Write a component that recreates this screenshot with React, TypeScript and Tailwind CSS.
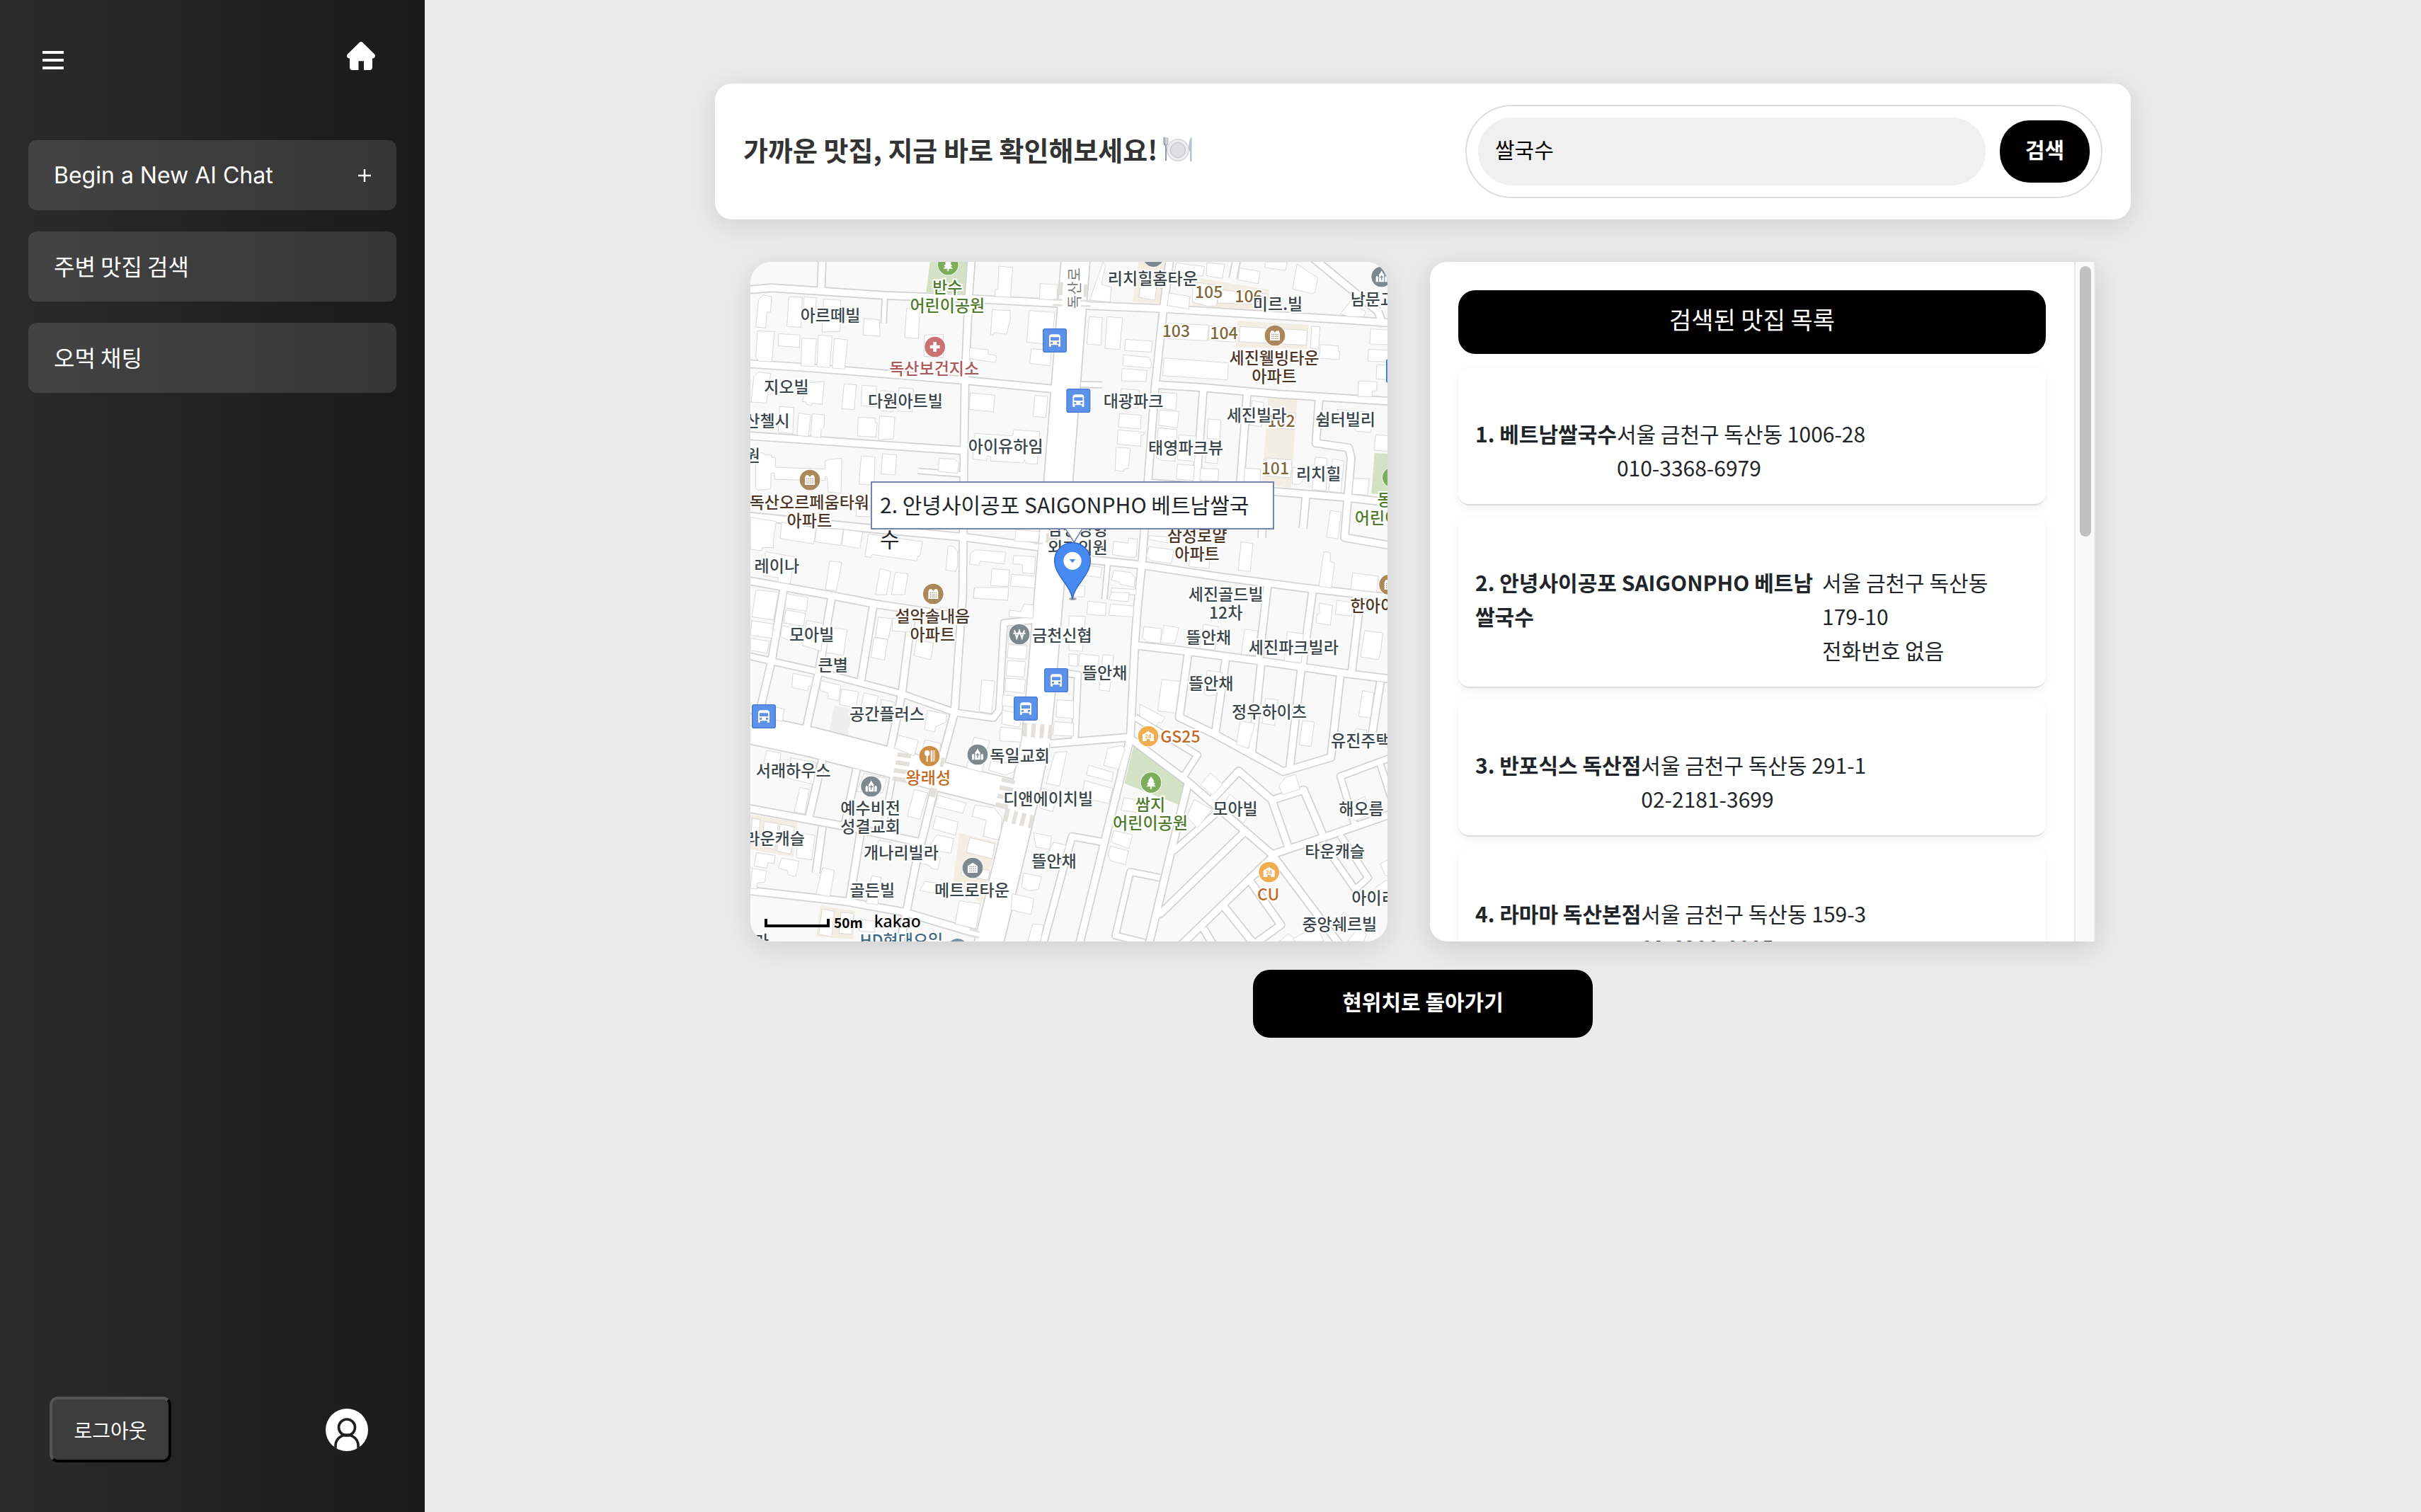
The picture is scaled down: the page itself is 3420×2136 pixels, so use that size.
import React from "react";

type Shape = string;

/* ---------- map geometry (viewBox units, 3 units per pixel) ---------- */

type Road = { d: string; w?: number };

const roads: Road[] = [
  { d: "M0 150L120 140L600 172L960 186L1330 205L1460 215L1780 228L2550 275L2760 290" },
  { d: "M968 0L955 180L940 530L935 870L932 1200L930 1440L895 1940L830 2180L730 2590L660 2940" },
  { d: "M0 460L300 480L940 532L1310 568" },
  { d: "M1430 549L1520 551", w: 20 },
  { d: "M1745 550L1940 562L2260 590L2760 622" },
  { d: "M1810 0L1780 230L1745 560L1715 960L1690 1300L1670 1500L1660 1640L1640 2050L1540 2450L1420 2940" },
  { d: "M0 765L500 800L935 830" },
  { d: "M740 916L925 930", w: 18 },
  { d: "M0 1105L540 1160L940 1197L1250 1238" },
  { d: "M1470 1292L1690 1315L2020 1365L2380 1412L2760 1455" },
  { d: "M0 1377L380 1445L560 1480L930 1535" },
  { d: "M172 1410L120 1720L66 1950" },
  { d: "M375 1450L320 1765L262 2030" },
  { d: "M552 1480L498 1810" },
  { d: "M715 1520L672 1860L620 2110" },
  { d: "M0 1695L310 1765L670 1860L900 1940L1060 1963L1084 1930L1105 1560L1230 1548", w: 24 },
  { d: "M335 2140L275 2400" },
  { d: "M480 2180L430 2420" },
  { d: "M634 2210L590 2440", w: 20 },
  { d: "M500 2430L450 2740" },
  { d: "M0 2342L420 2420L750 2490" },
  { d: "M0 2692L430 2740L680 2785L1000 2880" },
  { d: "M335 2425L308 2620" },
  { d: "M1660 1655L1880 1680L2180 1720L2560 1775L2760 1800" },
  { d: "M1885 1690L1848 1960L1995 2030L2288 2190L2490 2130L2530 1785" },
  { d: "M2045 1710L2000 2030" },
  { d: "M2195 1730L2155 2110" },
  { d: "M2365 1750L2315 2180" },
  { d: "M2222 1400L2185 1720" },
  { d: "M2412 1430L2370 1740" },
  { d: "M2615 1460L2578 1770" },
  { d: "M2700 1810L2665 2030" },
  { d: "M1640 2050L1880 2230L2240 2540L2540 2940" },
  { d: "M1660 1960L1925 2120L1870 2205", w: 24 },
  { d: "M1885 2240L1815 2520L1715 2940" },
  { d: "M1820 2530L2000 2370", w: 24 },
  { d: "M1985 2310L2100 2188L2240 2310L2310 2510" },
  { d: "M2250 2308L2375 2268L2455 2455" },
  { d: "M2245 2540L2480 2462L2760 2365" },
  { d: "M2120 2450L1770 2790L1745 2800" },
  { d: "M2250 2545L1840 2940" },
  { d: "M2145 2650L2278 2840L2160 2925" },
  { d: "M2035 2760L2180 2940" },
  { d: "M1950 2855L2000 2940" },
  { d: "M2530 2460L2648 2640L2594 2690L2455 2490", w: 24 },
  { d: "M2760 2125L2530 2210L2590 2410", w: 24 },
  { d: "M2700 2160L2745 2300", w: 24 },
  { d: "M1300 2072L1630 2045" },
  { d: "M1330 1768L1418 1780L1405 2055", w: 24 },
  { d: "M1530 2490L1393 2465L1265 2940", w: 26 },
  { d: "M1765 2640L1640 2615L1577 2885L1700 2915", w: 24 },
  { d: "M1950 565L1920 975" },
  { d: "M2135 590L2105 985" },
  { d: "M1725 968L2250 1003L2550 1028L2760 1052" },
  { d: "M2440 610L2427 798L2565 818L2576 860L2548 1198L2760 1235" },
  { d: "M2385 1020L2372 1160" },
  { d: "M2205 1010L2198 1200" },
  { d: "M2410 10L2690 240" },
  { d: "M2095 0L2075 100" },
  { d: "M2690 240L2705 280" },
  { d: "M335 0L330 140" },
  { d: "M600 180L595 290", w: 18 },
  { d: "M1545 1300L1530 1460", w: 18 },
  { d: "M1410 0L1365 580L1335 960L1290 1500L1262 1840L1240 2060L1190 2300L1035 2940", w: 118 },
  { d: "M0 2003L290 2065L620 2150L850 2215L1150 2290", w: 122 },
];

const parks: Shape[] = [
  "795,0 955,0 940,165 775,160",
  "1655,2080 1870,2240 1845,2330 1615,2240",
  "2675,840 2760,845 2760,1020 2662,1012",
];

const estates: Shape[] = [
  "1680,0 1795,0 1765,205 1650,200",
  "1940,100 2230,148 2220,235 1900,215",
  "2095,280 2395,297 2390,400 2088,390",
  "2225,605 2348,615 2320,990 2198,965",
  "0,2365 230,2405 212,2550 0,2515",
  "915,2450 1075,2490 1010,2750 890,2655",
  "325,2760 475,2780 465,2900 310,2890",
];

const crosswalks: Shape[] = [
  "655,2108 712,2116 708,2134 651,2126",
  "648,2142 706,2150 702,2168 644,2160",
  "641,2176 700,2184 696,2202 637,2194",
  "634,2210 692,2218 688,2236 630,2228",
  "1188,1982 1204,1984 1200,2042 1184,2040",
  "1223,1985 1241,1987 1236,2046 1218,2044",
  "1259,1988 1277,1990 1272,2049 1254,2047",
  "1295,1991 1311,1993 1306,2052 1290,2050",
  "1097,2216 1153,2228 1149,2244 1093,2232",
  "1088,2248 1145,2260 1141,2278 1084,2266",
  "1079,2284 1120,2292 1116,2310 1075,2302",
  "1071,2320 1125,2330 1121,2348 1067,2338",
  "1114,2346 1130,2350 1118,2404 1102,2400",
  "1150,2356 1166,2360 1152,2414 1136,2410",
  "1183,2364 1201,2368 1187,2422 1169,2418",
  "1217,2372 1232,2376 1220,2432 1206,2428",
  "1312,185 1352,187 1352,195 1312,193",
  "1312,208 1352,210 1352,218 1312,216",
  "1340,115 1356,116 1352,172 1336,170",
  "1430,190 1472,192 1472,200 1430,198",
  "1430,212 1472,214 1472,222 1430,220",
  "1443,125 1460,126 1458,180 1442,178",
  "1285,1180 1350,1184 1346,1225 1282,1220",
  "1232,1218 1270,1220 1268,1228 1230,1226",
  "962,2855 1002,2866 1000,2874 960,2863",
  "960,2880 1000,2890 998,2898 958,2888",
  "840,2130 855,2134 846,2172 832,2168",
  "795,2258 822,2262 812,2300 788,2294",
];

const buildings: { x: number; y: number; shapes: Shape[] }[] = [
  {
    x: 0,
    y: 0,
    shapes: [
      "65,190 85,170 120,178 115,243 100,243 95,310 53,306",
      "193,177 250,180 244,307 185,303",
      "258,178 310,182 306,240 254,238",
      "340,187 412,192 410,325 334,327",
      "512,270 576,275 580,345 507,340",
      "692,227 748,230 742,355 684,350",
      "60,322 132,326 121,453 66,450 53,435",
      "150,334 240,340 238,392 148,386",
      "248,353 310,356 302,474 245,470",
      "318,340 377,344 366,478 312,474",
      "386,354 442,360 430,484 377,480",
      "768,340 848,337 848,437 765,430",
      "1083,48 1142,54 1132,180 1066,176 1068,147 1079,147",
      "1258,122 1332,127 1328,192 1255,188",
      "1055,232 1130,236 1132,270 1116,336 1062,330 1060,340 1048,338",
      "1212,236 1320,244 1308,380 1201,370",
      "960,394 1038,402 1036,420 1072,428 1070,456 958,440",
      "1220,398 1306,404 1300,470 1214,460",
      "45,515 65,497 116,503 98,628 33,624",
      "270,543 343,536 334,634 293,628 290,638 268,634 266,624 250,622",
      "427,547 479,551 470,656 418,652",
      "503,553 564,557 562,645 500,640",
      "583,575 638,580 635,665 580,660",
      "660,563 721,568 716,666 655,662",
      "154,643 214,647 210,757 148,752",
      "234,670 286,678 280,735 275,770 228,765",
      "292,674 344,678 342,732 330,740 328,775 286,770",
      "487,688 560,692 558,710 568,714 562,772 484,768",
      "578,683 642,688 636,780 572,784",
      "962,585 1066,595 1060,665 958,655",
      "1236,596 1290,600 1282,690 1228,684",
      "52,845 80,838 92,848 118,848 120,858 136,860 136,900 346,908 346,874 358,868 418,862 414,1010 360,1005 356,942 346,942 346,956 134,952 132,925 118,925 116,992 62,998 52,985",
      "500,852 558,856 554,975 490,972",
      "590,843 650,848 644,932 584,928",
      "830,862 896,866 914,884 908,926 826,918",
      "982,757 1142,767 1146,741 1256,749 1246,887 1196,884 1192,868 1186,882 1048,874 1048,854 1034,852 1030,872 972,866",
      "480,1060 540,1064 540,1110 478,1108",
      "30,1112 140,1130 126,1215 128,1240 80,1242 78,1254 30,1248",
      "163,1133 308,1158 298,1225 156,1202",
      "312,1157 424,1164 412,1232 303,1216",
      "426,1163 506,1175 494,1244 418,1232",
      "530,1183 760,1216 748,1276 740,1278 734,1297 546,1270 542,1283 516,1278",
      "868,1234 890,1236 908,1256 908,1320 900,1342 858,1336",
      "94,1258 218,1280 198,1395 146,1386 148,1368 84,1360",
      "366,1298 418,1304 402,1385 394,1424 348,1418",
      "580,1330 626,1342 606,1440 560,1440",
      "644,1345 698,1352 684,1440 628,1440",
      "964,1264 984,1250 1112,1260 1106,1310 1004,1298 998,1316 958,1310",
      "1146,1274 1238,1280 1234,1352 1184,1348 1184,1312 1142,1310",
      "1054,1330 1128,1336 1124,1406 1048,1402",
      "1136,1354 1238,1362 1234,1412 1132,1404",
      "978,1412 1124,1422 1120,1464 975,1455",
      "1156,1165 1256,1172 1250,1218 1150,1214",
    ],
  },
  {
    x: 1380,
    y: 0,
    shapes: [
      "145,30 155,45 138,125 180,137 174,200 88,192",
      "306,100 375,110 364,192 297,180",
      "424,162 512,176 508,230 416,215",
      "585,34 660,40 650,100 582,88",
      "722,56 810,70 802,122 718,106",
      "832,30 925,30 918,66 830,54",
      "455,34 575,50 568,90 448,70",
      "967,40 1055,98 1042,160 1030,164 948,145",
      "525,115 640,130 625,218 590,218 524,200",
      "634,148 840,166 838,210 630,204",
      "86,262 142,266 136,383 76,378",
      "162,262 227,267 216,401 153,397",
      "240,358 353,366 349,412 236,406",
      "230,424 340,434 350,460 348,480 228,470",
      "226,482 331,490 326,537 223,534",
      "420,290 592,298 586,364 418,356",
      "595,300 710,308 706,370 592,362",
      "726,304 1010,320 1006,383 721,368",
      "1028,302 1064,305 1058,400 1024,396",
      "1066,380 1142,386 1140,408 1148,410 1146,444 1060,438",
      "403,437 676,458 672,530 397,512",
      "1278,314 1380,320 1380,382 1275,378",
      "1270,400 1380,406 1380,456 1266,450",
      "1305,466 1380,470 1380,530 1302,526",
      "1228,534 1306,538 1304,576 1286,578 1284,602 1224,600",
      "1195,195 1258,243 1250,262 1188,262 1150,250",
      "222,568 300,574 292,650 216,645",
      "390,582 458,588 452,658 384,650",
      "215,673 307,680 303,738 209,730",
      "383,658 466,664 460,733 380,722",
      "208,742 320,752 316,764 306,764 304,811 204,802",
      "378,734 458,740 450,875 390,870 368,855",
      "466,763 540,768 532,876 460,868",
      "590,696 644,700 640,782 586,778",
      "200,816 260,820 252,906 234,908 232,917 196,914",
      "460,887 533,893 528,957 454,950",
      "558,904 634,908 632,958 554,955",
      "582,800 636,810 630,884 578,880",
      "745,904 812,908 810,965 742,960",
      "776,618 826,626 816,728 766,722",
      "855,664 962,670 956,740 848,732",
      "836,860 945,870 940,945 828,936",
      "1135,655 1280,668 1280,752 1220,748",
      "1300,763 1380,768 1380,835 1293,828",
      "1044,858 1094,862 1090,1000 1030,995",
      "1118,864 1166,874 1152,1008 1100,1002",
      "948,900 1032,906 978,972 946,972",
      "1206,946 1272,950 1266,1018 1200,1014",
      "1108,1084 1154,1090 1140,1204 1092,1196",
      "730,1216 780,1224 768,1342 717,1336",
      "340,1190 420,1196 440,1216 436,1225 336,1205",
      "190,1214 250,1222 254,1200 290,1206 286,1278 270,1283 183,1270",
      "340,1237 445,1250 434,1308 346,1296 328,1275",
      "515,1270 598,1278 594,1330 508,1320",
      "75,1316 140,1325 134,1368 70,1358",
      "190,1337 262,1346 282,1368 276,1408 216,1396 214,1386 180,1378",
      "180,1412 285,1418 285,1440 178,1440",
      "20,1400 68,1404 66,1450 16,1448",
      "1080,1258 1107,1262 1108,1300 1126,1306 1112,1412 1060,1405",
      "1202,1348 1312,1362 1304,1430 1195,1418",
    ],
  },
  {
    x: 0,
    y: 1440,
    shapes: [
      "54,-20 150,-10 128,108 36,94",
      "184,-4 274,12 268,70 176,56",
      "180,64 264,80 256,133 170,120",
      "36,110 128,125 122,185 30,172",
      "30,185 110,198 100,250 90,246 30,236",
      "164,132 204,138 200,196 158,180",
      "268,110 338,122 330,240 250,215",
      "362,140 440,148 424,258 352,246",
      "572,96 632,102 614,190 560,180",
      "554,182 612,190 598,278 541,266",
      "632,100 716,108 708,158 632,154",
      "734,190 806,206 794,276 724,258",
      "980,-30 1125,-30 1120,24 976,15",
      "1128,66 1176,72 1190,40 1230,44 1228,100 1126,94",
      "1126,140 1210,146 1200,210 1122,206",
      "1124,212 1203,216 1198,274 1118,268",
      "1120,280 1196,284 1190,350 1114,344",
      "1112,354 1196,360 1190,418 1108,408",
      "1010,362 1066,366 1052,504 1000,495",
      "1100,426 1130,426 1182,440 1178,480 1096,470",
      "1098,490 1150,500 1176,550 1168,562 1096,548",
      "1090,562 1182,570 1178,625 1086,620",
      "1330,446 1400,450 1400,525 1325,518",
      "1318,538 1400,545 1400,600 1312,596",
      "1320,670 1372,664 1340,812 1284,800",
      "210,334 295,350 290,388 276,388 272,408 206,394",
      "328,364 413,384 404,450 358,440 360,418 326,406",
      "416,400 488,412 478,480 408,466",
      "512,416 572,430 560,480 500,472",
      "585,444 640,456 630,480 580,475",
      "780,490 862,506 860,540 814,560 812,582 768,572",
      "138,476 174,486 165,538 130,530",
      "657,596 742,618 724,684 640,650",
      "770,616 836,630 830,700 750,685",
      "978,604 1044,620 1010,752 945,735",
      "1050,704 1160,720 1144,752 1110,765 1040,744",
      "100,660 160,672 150,730 86,715",
      "200,692 310,712 296,804 188,778",
      "240,818 280,825 260,930 216,920",
      "512,757 608,780 590,840 480,835",
      "725,826 782,840 748,952 695,940",
      "824,850 944,884 930,927 814,898",
      "982,892 1064,904 1096,946 1090,1010 1080,1040 1017,1024 1030,956 970,940",
      "816,938 910,964 900,1020 802,992",
      "820,1018 892,1034 880,1096 780,1080",
      "960,1030 1066,1056 1056,1120 945,1092",
      "930,1150 1046,1170 1036,1210 922,1190",
      "38,948 72,954 64,1050 30,1050",
      "88,962 148,970 134,1080 78,1068",
      "156,972 216,985 200,1100 142,1086",
      "230,1010 304,1020 290,1124 225,1115",
      "56,1094 136,1106 130,1140 104,1136 100,1160 46,1150",
      "163,1116 236,1130 222,1195 190,1188 188,1170 148,1160",
      "38,1160 98,1170 92,1218 60,1222 58,1248 30,1245",
      "336,1157 386,1168 380,1210 366,1280 308,1268",
      "572,1042 630,1050 620,1120 560,1110",
      "760,1100 836,1115 824,1166 800,1160 780,1145 750,1138",
      "544,1192 584,1198 570,1315 520,1308",
      "768,1216 820,1222 808,1265 748,1255",
      "915,1298 1005,1310 986,1416 897,1396",
      "334,1332 386,1342 374,1450 320,1440",
      "414,1346 468,1352 460,1440 405,1435",
      "496,1376 560,1385 556,1430 490,1425",
      "1230,1010 1306,1024 1298,1080 1240,1070",
      "1188,1180 1264,1196 1250,1250 1210,1255 1180,1240",
      "1140,1268 1232,1288 1220,1356 1134,1336",
      "1264,820 1330,840 1312,920 1256,905",
      "1226,1395 1272,1400 1260,1470 1206,1470",
      "1314,1050 1368,1062 1340,1140 1280,1120",
    ],
  },
  {
    x: 1380,
    y: 1440,
    shapes: [
      "0,90 70,92 58,240 0,236",
      "80,28 158,36 155,90 76,84",
      "176,40 274,48 272,94 169,88",
      "180,-10 256,-8 252,30 170,22",
      "0,250 38,254 36,304 0,300",
      "46,250 128,260 124,306 40,302",
      "144,254 190,258 172,410 128,404",
      "318,136 392,144 388,206 330,200 312,182",
      "402,130 466,140 448,208 388,204",
      "570,126 634,136 618,235 555,228",
      "745,147 800,154 790,258 730,252",
      "926,157 994,166 985,290 912,280",
      "1060,36 1118,46 1108,130 1048,120 1052,82 1062,80",
      "1136,24 1200,34 1198,90 1130,84",
      "1254,153 1330,162 1322,236 1312,276 1236,264 1240,236",
      "394,360 470,368 452,502 376,492",
      "586,322 650,330 624,424 590,430 572,420",
      "834,440 886,446 872,554 818,546",
      "725,536 788,545 760,652 710,634",
      "990,534 1040,540 1026,644 976,636",
      "1244,407 1292,416 1278,522 1228,516",
      "1216,568 1262,574 1255,630 1206,625",
      "300,464 406,520 392,545 380,540 370,556 300,515",
      "165,650 226,640 238,654 210,740 148,724",
      "84,723 188,754 182,792 74,764",
      "66,787 186,822 168,886 56,860",
      "234,860 320,876 308,925 220,914",
      "190,1000 270,1018 254,1077 178,1048",
      "176,1066 252,1086 240,1145 176,1128 166,1104",
      "600,756 652,804 608,850 558,806",
      "530,868 606,910 544,990 500,940",
      "682,846 770,920 740,968 650,900",
      "890,810 916,776 960,762 980,824 906,848",
      "890,1470 930,1438 975,1470",
      "950,1460 1050,1400 1080,1470 960,1470",
      "1120,1400 1165,1346 1220,1390 1180,1430",
      "1180,1470 1230,1410 1260,1440 1250,1470",
      "1320,1140 1380,1110 1380,1195 1340,1190",
      "1295,1245 1345,1210 1380,1240 1380,1280 1310,1270",
      "1185,890 1255,855 1280,930 1210,960",
    ],
  },
];

/* ---------- map labels and markers ---------- */

type Tone = "slate" | "green" | "brown" | "gold" | "red" | "orange" | "blue";

const toneClass: Record<Tone, string> = {
  slate: "text-[#3a454c]",
  green: "text-[#4e7a2b]",
  brown: "text-[#4d3626]",
  gold: "text-[#80683a]",
  red: "text-[#ae5759]",
  orange: "text-[#c2681f]",
  blue: "text-[#3f6a85]",
};

const labels: { t: string; x: number; y: number; c?: Tone }[] = [
  { t: "102", x: 2283, y: 705, c: "gold" },
  { t: "105", x: 1976, y: 158, c: "gold" },
  { t: "106", x: 2145, y: 175, c: "gold" },
  { t: "103", x: 1837, y: 322, c: "gold" },
  { t: "104", x: 2040, y: 333, c: "gold" },
  { t: "101", x: 2257, y: 905, c: "gold" },
  { t: "아르떼빌", x: 372, y: 258 },
  { t: "반수\n어린이공원", x: 868, y: 175, c: "green" },
  { t: "독산보건지소", x: 812, y: 483, c: "red" },
  { t: "지오빌", x: 186, y: 560 },
  { t: "다원아트빌", x: 690, y: 620 },
  { t: "산첼시", x: 105, y: 703 },
  { t: "원", x: 43, y: 850 },
  { t: "아이유하임", x: 1115, y: 812 },
  { t: "독산오르페움타워\n아파트", x: 283, y: 1087, c: "brown" },
  { t: "레이나", x: 145, y: 1320 },
  { t: "리치힐홈타운", x: 1738, y: 100 },
  { t: "미르.빌", x: 2268, y: 210 },
  { t: "남문교회", x: 2703, y: 187 },
  { t: "세진웰빙타운\n아파트", x: 2253, y: 475, c: "brown" },
  { t: "대광파크", x: 1656, y: 620 },
  { t: "세진빌라", x: 2178, y: 680 },
  { t: "쉼터빌리", x: 2555, y: 698 },
  { t: "태영파크뷰", x: 1878, y: 818 },
  { t: "리치힐", x: 2441, y: 930 },
  { t: "동산\n어린이공원", x: 2753, y: 1075, c: "green" },
  { t: "삼성로얄\n아파트", x: 1926, y: 1228, c: "brown" },
  { t: "삼성정형\n외과의원", x: 1420, y: 1203 },
  { t: "세진골드빌\n12차", x: 2048, y: 1478 },
  { t: "한아이", x: 2671, y: 1488, c: "brown" },
  { t: "설악솔내음\n아파트", x: 805, y: 1570, c: "brown" },
  { t: "모아빌", x: 293, y: 1610 },
  { t: "큰별", x: 383, y: 1740 },
  { t: "금천신협", x: 1354, y: 1612 },
  { t: "뜰안채", x: 1975, y: 1622 },
  { t: "세진파크빌라", x: 2335, y: 1663 },
  { t: "뜰안채", x: 1535, y: 1772 },
  { t: "뜰안채", x: 1985, y: 1818 },
  { t: "정우하이츠", x: 2232, y: 1938 },
  { t: "공간플러스", x: 612, y: 1947 },
  { t: "GS25", x: 1855, y: 2042, c: "orange" },
  { t: "유진주택", x: 2620, y: 2060 },
  { t: "서래하우스", x: 215, y: 2185 },
  { t: "왕래성", x: 787, y: 2217, c: "orange" },
  { t: "독일교회", x: 1175, y: 2122 },
  { t: "예수비전\n성결교회", x: 542, y: 2385 },
  { t: "크라운캐슬", x: 105, y: 2475 },
  { t: "개나리빌라", x: 672, y: 2533 },
  { t: "골든빌", x: 550, y: 2693 },
  { t: "메트로타운", x: 972, y: 2693 },
  { t: "뜰안채", x: 1320, y: 2570 },
  { t: "디앤에이치빌", x: 1295, y: 2305 },
  { t: "쌈지\n어린이공원", x: 1728, y: 2370, c: "green" },
  { t: "모아빌", x: 2088, y: 2347 },
  { t: "해오름", x: 2622, y: 2347 },
  { t: "타운캐슬", x: 2510, y: 2528 },
  { t: "아이리스", x: 2708, y: 2725 },
  { t: "중앙쉐르빌", x: 2530, y: 2838 },
  { t: "CU", x: 2228, y: 2710, c: "orange" },
  { t: "HD현대오일", x: 673, y: 2905, c: "blue" },
  { t: "라", x: 80, y: 2910 },
];

type PoiKind = "tree" | "cross" | "apartment" | "church" | "house" | "won" | "food" | "store" | "plain";

const pois: { k: PoiKind; x: number; y: number; f: string }[] = [
  { k: "tree", x: 868, y: 42, f: "#7dad5a" },
  { k: "tree", x: 1728, y: 2237, f: "#7dad5a" },
  { k: "tree", x: 2752, y: 943, f: "#7dad5a" },
  { k: "cross", x: 812, y: 390, f: "#cb7073" },
  { k: "apartment", x: 282, y: 954, f: "#aa885a" },
  { k: "apartment", x: 2253, y: 342, f: "#aa885a" },
  { k: "apartment", x: 805, y: 1437, f: "#aa885a" },
  { k: "apartment", x: 2738, y: 1398, f: "#aa885a" },
  { k: "church", x: 2705, y: 93, f: "#7d898f" },
  { k: "church", x: 542, y: 2253, f: "#7d898f" },
  { k: "church", x: 993, y: 2118, f: "#7d898f" },
  { k: "house", x: 972, y: 2598, f: "#7d898f" },
  { k: "house", x: 1738, y: 8, f: "#7d898f" },
  { k: "won", x: 1170, y: 1608, f: "#7d898f" },
  { k: "food", x: 789, y: 2124, f: "#cf8e48" },
  { k: "store", x: 1716, y: 2040, f: "#f1ad50" },
  { k: "store", x: 2228, y: 2616, f: "#f1ad50" },
  { k: "plain", x: 908, y: 2941, f: "#7995a8" },
];

const busStops = [
  [1320, 363],
  [1420, 618],
  [2775, 492],
  [87, 1956],
  [1326, 1803],
  [1197, 1923],
];

const dots = [-12, -4, 4, 12].flatMap((x) => [-4, 5, 14].map((y) => [x, y]));

function PoiGlyph({ kind, fill }: { kind: PoiKind; fill: string }) {
  if (kind === "tree")
    return <path fill="#fff" d="M0-26L14-6H9L18 6H11L20 17H3V27H-3V17H-20L-11 6H-18L-9-6H-14Z" />;
  if (kind === "cross") return <path fill="#fff" d="M-7-21H7V-7H21V7H7V21H-7V7H-21V-7H-7Z" />;
  if (kind === "apartment" || kind === "house")
    return (
      <>
        <path
          fill="#fff"
          d={
            kind === "house"
              ? "M-21 21V-8L0-22L21-8V21Z"
              : "M-21 21V-10L-16-20H-7L0-13L7-20H16L21-10V21Z"
          }
        />
        {dots.map(([x, y]) => (
          <rect key={`${x},${y}`} x={x - 2} y={y - 3} width="4" height="4" fill={fill} />
        ))}
      </>
    );
  if (kind === "church")
    return (
      <>
        <path
          fill="#fff"
          d="M-24 22V2Q-19-9-14 2V22ZM24 22V2Q19-9 14 2V22ZM-11 22V-10L-6-14L0-26L6-14L11-10V22Z"
        />
        <path stroke={fill} strokeWidth="4" d="M0-6V14M-7 1H7" />
      </>
    );
  if (kind === "won")
    return (
      <path
        fill="none"
        stroke="#fff"
        strokeWidth="6"
        d="M-21-17L-11 16L0-15L11 16L21-17M-26-4H26"
      />
    );
  if (kind === "food")
    return (
      <g fill="#fff">
        <ellipse cx="-10" cy="-12" rx="11" ry="12" />
        <path d="M-13-2H-7V24H-13ZM5-24H11V24H5ZM14-24H17V24H14ZM20-24H23V20L20 24Z" />
      </g>
    );
  if (kind === "store")
    return (
      <>
        <path fill="#fff" d="M-24 21V-7Q0-20 0-22Q0-20 24-7V21H7V12H-7V21Z" />
        <text
          y="8"
          textAnchor="middle"
          fontSize="21"
          fontWeight="700"
          fill={fill}
          className="font-['Inter',sans-serif]"
        >
          24
        </text>
      </>
    );
  return <circle r="20" fill="#fff" />;
}

function MapCanvas() {
  return (
    <svg
      aria-hidden="true"
      viewBox="30 30 2700 2880"
      preserveAspectRatio="none"
      className="absolute inset-0 size-full"
    >
      <rect width="2800" height="3000" fill="#f9f9f9" />
      {parks.map((p) => (
        <polygon key={p} points={p} fill="#d3e1c4" />
      ))}
      {estates.map((p) => (
        <polygon key={p} points={p} fill="#f3ede2" />
      ))}
      <polygon points="385,1910 465,1925 440,2045 365,2020" fill="#eeeeee" />
      <g fill="none" stroke="#d1d1d1" strokeLinejoin="round">
        {roads.map((r) => (
          <path key={r.d} d={r.d} strokeWidth={(r.w ?? 28) + 10} />
        ))}
      </g>
      <g fill="none" stroke="#ffffff" strokeLinejoin="round">
        {roads.map((r) => (
          <path key={r.d} d={r.d} strokeWidth={r.w ?? 28} />
        ))}
      </g>
      {buildings.map((b) => (
        <g
          key={`${b.x}-${b.y}`}
          transform={`translate(${b.x} ${b.y})`}
          fill="#fffffff0"
          stroke="#d9d9d9"
          strokeWidth="3"
        >
          {b.shapes.map((s) => (
            <polygon key={s} points={s} />
          ))}
        </g>
      ))}
      {crosswalks.map((p) => (
        <polygon key={p} points={p} fill="#e3dfda" />
      ))}
    </svg>
  );
}

function MapMarkers() {
  return (
    <svg
      aria-hidden="true"
      viewBox="30 30 2700 2880"
      preserveAspectRatio="none"
      className="absolute inset-0 size-full"
    >
      {busStops.map(([x, y]) => (
        <g key={`${x}-${y}`} transform={`translate(${x} ${y})`}>
          <rect x="-49" y="-49" width="98" height="98" rx="8" fill="#5c92ea" stroke="#4379d6" strokeWidth="4" />
          <path fill="#fff" d="M-24 26V-15Q-24-26-12-26H12Q24-26 24-15V26H15V19H-15V26Z" />
          <path fill="#5c92ea" d="M-18-14H18V0H-18ZM-18 6H-9V14H-18ZM9 6H18V14H9Z" />
        </g>
      ))}
      {pois.map((p) => (
        <g key={`${p.x}-${p.y}`} transform={`translate(${p.x} ${p.y})`}>
          <circle r="43" fill={p.f} stroke="#fff" strokeWidth="5" paintOrder="stroke" />
          <PoiGlyph kind={p.k} fill={p.f} />
        </g>
      ))}
    </svg>
  );
}

function MapPin() {
  return (
    <svg
      aria-hidden="true"
      viewBox="30 30 2700 2880"
      preserveAspectRatio="none"
      className="absolute inset-0 size-full"
    >
      <ellipse cx="1396" cy="1458" rx="16" ry="6" fill="#00000055" />
      <path
        fill="#478af2"
        stroke="#2c62c8"
        strokeWidth="4"
        d="M1395 1460C1388 1400 1319 1360 1319 1296A76 76 0 0 1 1471 1296C1471 1360 1402 1400 1395 1460Z"
      />
      <circle cx="1395" cy="1297" r="38" fill="#fff" />
      <path fill="#478af2" d="M1382 1290H1408L1395 1306Z" />
      <path fill="#fff" stroke="#7884b0" strokeWidth="5" d="M1366 1162L1402 1218L1436 1162" />
    </svg>
  );
}

function RestaurantMap() {
  return (
    <section
      aria-label="지도"
      className="relative h-[960px] min-w-0 flex-[900] overflow-hidden rounded-[30px] bg-[#f9f9f9] shadow-[0_8px_40px_rgba(0,0,0,0.12)]"
    >
      <MapCanvas />
      {labels.map((l) => (
        <span
          key={`${l.x}-${l.y}`}
          className={`absolute -translate-x-1/2 -translate-y-1/2 text-center text-[23px] leading-[26px] font-medium whitespace-pre [-webkit-text-stroke:4px_#ffffff] [paint-order:stroke_fill] ${toneClass[l.c ?? "slate"]}`}
          style={{ left: `${(l.x - 33) / 27}%`, top: `${(l.y - 35) / 28.8}%` }}
        >
          {l.t}
        </span>
      ))}
      <span className="absolute top-[8px] left-[434px] text-[21px] leading-[26px] text-[#7a7a7a] [writing-mode:vertical-rl]">
        <span className="inline-block rotate-180 [text-orientation:sideways]">독산로</span>
      </span>
      <MapMarkers />
      <div className="absolute bottom-[20px] left-5 flex items-end text-black">
        <span className="h-3 w-[92px] border-4 border-t-0 border-black" />
        <span className="ml-1.5 text-[19px] leading-[14px] font-semibold">50m</span>
        <span className="ml-4 font-['Noto_Sans',sans-serif] text-[23px] leading-[18px] font-medium">
          kakao
        </span>
      </div>
      <div className="absolute top-[310px] left-[170px] h-[68px] w-[570px] border-2 border-[#7884b0] bg-white pt-1.5 pr-4 pl-[11px] text-[30px] leading-[48px]">
        <span className="break-all">2. 안녕사이공포 SAIGONPHO 베트남쌀국수</span>
      </div>
      <MapPin />
    </section>
  );
}

/* ---------- restaurant list ---------- */

const restaurants = [
  { name: "1. 베트남쌀국수", address: "서울 금천구 독산동 1006-28", phone: "010-3368-6979" },
  { name: "2. 안녕사이공포 SAIGONPHO 베트남쌀국수", address: "서울 금천구 독산동 179-10", phone: "전화번호 없음" },
  { name: "3. 반포식스 독산점", address: "서울 금천구 독산동 291-1", phone: "02-2181-3699" },
  { name: "4. 라마마 독산본점", address: "서울 금천구 독산동 159-3", phone: "02-6200-0005" },
];

function RestaurantList() {
  return (
    <section className="flex h-[960px] min-w-0 flex-[940] overflow-hidden rounded-l-[24px] bg-white shadow-[0_8px_40px_rgba(0,0,0,0.14)]">
      <div className="flex min-w-0 flex-1 flex-col overflow-hidden p-10">
        <h2 className="shrink-0 rounded-[24px] bg-black pt-4 pb-6 text-center text-[34px] leading-[50px] text-white">
          검색된 맛집 목록
        </h2>
        <ul className="mt-5 flex flex-col gap-4">
          {restaurants.map((r) => (
            <li
              key={r.name}
              className="flex shrink-0 rounded-[16px] border-b-2 border-[#dddddd] bg-white px-6 pt-[68px] pb-7 text-[30px] leading-[48px] shadow-[0_4px_12px_rgba(0,0,0,0.06)]"
            >
              <strong className="max-w-[490px] shrink-0 font-bold">{r.name}</strong>
              <div className="min-w-0">
                <p>{r.address}</p>
                <p>{r.phone}</p>
              </div>
            </li>
          ))}
        </ul>
      </div>
      <div aria-hidden="true" className="w-[30px] shrink-0 border-x-2 border-[#e8e8e8] bg-[#fafafa] px-1.5 pt-1.5">
        <div className="h-[382px] w-4 rounded-full bg-[#c1c1c1]" />
      </div>
    </section>
  );
}

/* ---------- header ---------- */

function PlateIcon() {
  return (
    <svg role="img" aria-label="접시" viewBox="0 0 42 38" className="h-[38px] w-[42px]">
      <circle cx="21" cy="20" r="15.5" fill="#ececee" stroke="#c9c9cd" strokeWidth="1" />
      <circle cx="21" cy="20" r="10.5" fill="#dfdfe1" stroke="#bdbdc2" strokeWidth="1" />
      <path d="M1.5 2V10Q1.500 13 4 13V35" stroke="#8f9aa8" strokeWidth="2" fill="none" />
      <path d="M4 2V14M6.500 2V10Q6.500 13 4 13" stroke="#a8b4c2" strokeWidth="1.500" fill="none" />
      <path d="M40.500 1V36Q38 37.500 38 35V22Q36 20 36.500 12Q37.500 3 40.500 1Z" fill="#b4c2d2" />
    </svg>
  );
}

function SearchHeader() {
  return (
    <header className="flex w-full max-w-[2000px] items-center justify-between rounded-[24px] bg-white px-10 py-[30px] shadow-[0_8px_40px_rgba(0,0,0,0.12)]">
      <h1 className="flex items-center gap-2 pb-1.5 text-[38px] leading-[56px] font-bold text-[#333333]">
        가까운 맛집, 지금 바로 확인해보세요!
        <PlateIcon />
      </h1>
      <form
        className="flex w-[900px] items-center gap-5 rounded-full border-2 border-[#dddddd] px-4 py-4"
        onSubmit={(e) => e.preventDefault()}
      >
        <input
          type="text"
          aria-label="맛집 검색어"
          defaultValue="쌀국수"
          className="h-24 min-w-0 flex-1 rounded-full bg-[#f0f0f0] px-6 pb-2 text-[30px] text-black outline-none"
        />
        <button
          type="submit"
          className="h-[88px] w-[127px] rounded-[42px] bg-black pb-2 text-[30px] font-bold text-white"
        >
          검색
        </button>
      </form>
    </header>
  );
}

/* ---------- sidebar ---------- */

function Sidebar() {
  return (
    <aside className="flex min-h-screen w-[600px] shrink-0 flex-col bg-[linear-gradient(90deg,#2b2b2b,#1a1a1a)] text-white">
      <div className="flex items-start justify-between pt-[59px] pr-[70px] pl-[60px]">
        <button type="button" aria-label="메뉴" className="mt-[13px]">
          <svg viewBox="0 0 30 26" className="h-[26px] w-[30px]" fill="#fff">
            <path d="M0 0H30V4H0ZM0 11H30V15H0ZM0 22H30V26H0Z" />
          </svg>
        </button>
        <a href="#home" aria-label="홈">
          <svg viewBox="0 0 40 40" className="size-10" fill="#fff">
            <path d="M17.500 1.200Q20-1 22.500 1.200L39 17.500Q41 20 39 22.500Q38 23.600 36 23.600V36Q36 40 32 40H24V27.300H16.500V40H8Q4 40 4 36V23.600Q2 23.600 1 22.500Q-1 20 1 17.500Z" />
          </svg>
        </a>
      </div>
      <nav className="mt-[99px] flex flex-col gap-[30px] px-10 text-[32px] leading-[48px]">
        <button
          type="button"
          className="flex h-[99px] items-center justify-between rounded-[12px] bg-white/12 px-9 font-['Inter','Noto_Sans_CJK_KR',sans-serif]"
        >
          Begin a New AI Chat
          <svg aria-hidden="true" viewBox="0 0 18 18" className="size-[18px]" stroke="#fff" strokeWidth="2.500">
            <path d="M9 0V18M0 9H18" />
          </svg>
        </button>
        <button type="button" className="flex h-[99px] items-center rounded-[12px] bg-white/12 px-9 pb-1">
          주변 맛집 검색
        </button>
        <button type="button" className="flex h-[99px] items-center rounded-[12px] bg-white/12 px-9 pb-1">
          오먹 채팅
        </button>
      </nav>
      <div className="mt-auto flex items-center justify-between pr-20 pb-[70px] pl-[70px]">
        <button
          type="button"
          className="h-[93px] w-[172px] rounded-[12px] border-4 border-t-[#555555] border-r-black border-b-black border-l-[#555555] bg-[#3d3d3d] text-[28px]"
        >
          로그아웃
        </button>
        <a href="#profile" aria-label="프로필">
          <svg viewBox="0 0 60 60" className="size-[60px]">
            <clipPath id="avatar">
              <circle cx="30" cy="30" r="30" />
            </clipPath>
            <g clipPath="url(#avatar)">
              <rect width="60" height="60" fill="#fff" />
              <g fill="none" stroke="#1f1f1f" strokeWidth="3.600">
                <circle cx="30" cy="26.500" r="11.500" />
                <path d="M14 60V52A16 15 0 0 1 46 52V60" />
              </g>
              <path fill="#1f1f1f" d="M0 53H12V60H0ZM48 53H60V60H48Z" />
            </g>
          </svg>
        </a>
      </div>
    </aside>
  );
}

export default function App() {
  return (
    <div className="flex min-h-screen bg-[#ebebeb] font-['Noto_Sans_CJK_KR','Noto_Sans',sans-serif] text-[#212529]">
      <Sidebar />
      <main className="flex min-w-0 flex-1 flex-col items-center px-10 pt-[118px]">
        <SearchHeader />
        <div className="mt-[60px] flex w-[95%] max-w-[1900px] gap-[60px]">
          <RestaurantMap />
          <RestaurantList />
        </div>
        <button
          type="button"
          className="mt-10 h-24 w-[480px] rounded-[24px] bg-black pb-2 text-[30px] font-bold text-white"
        >
          현위치로 돌아가기
        </button>
      </main>
    </div>
  );
}
